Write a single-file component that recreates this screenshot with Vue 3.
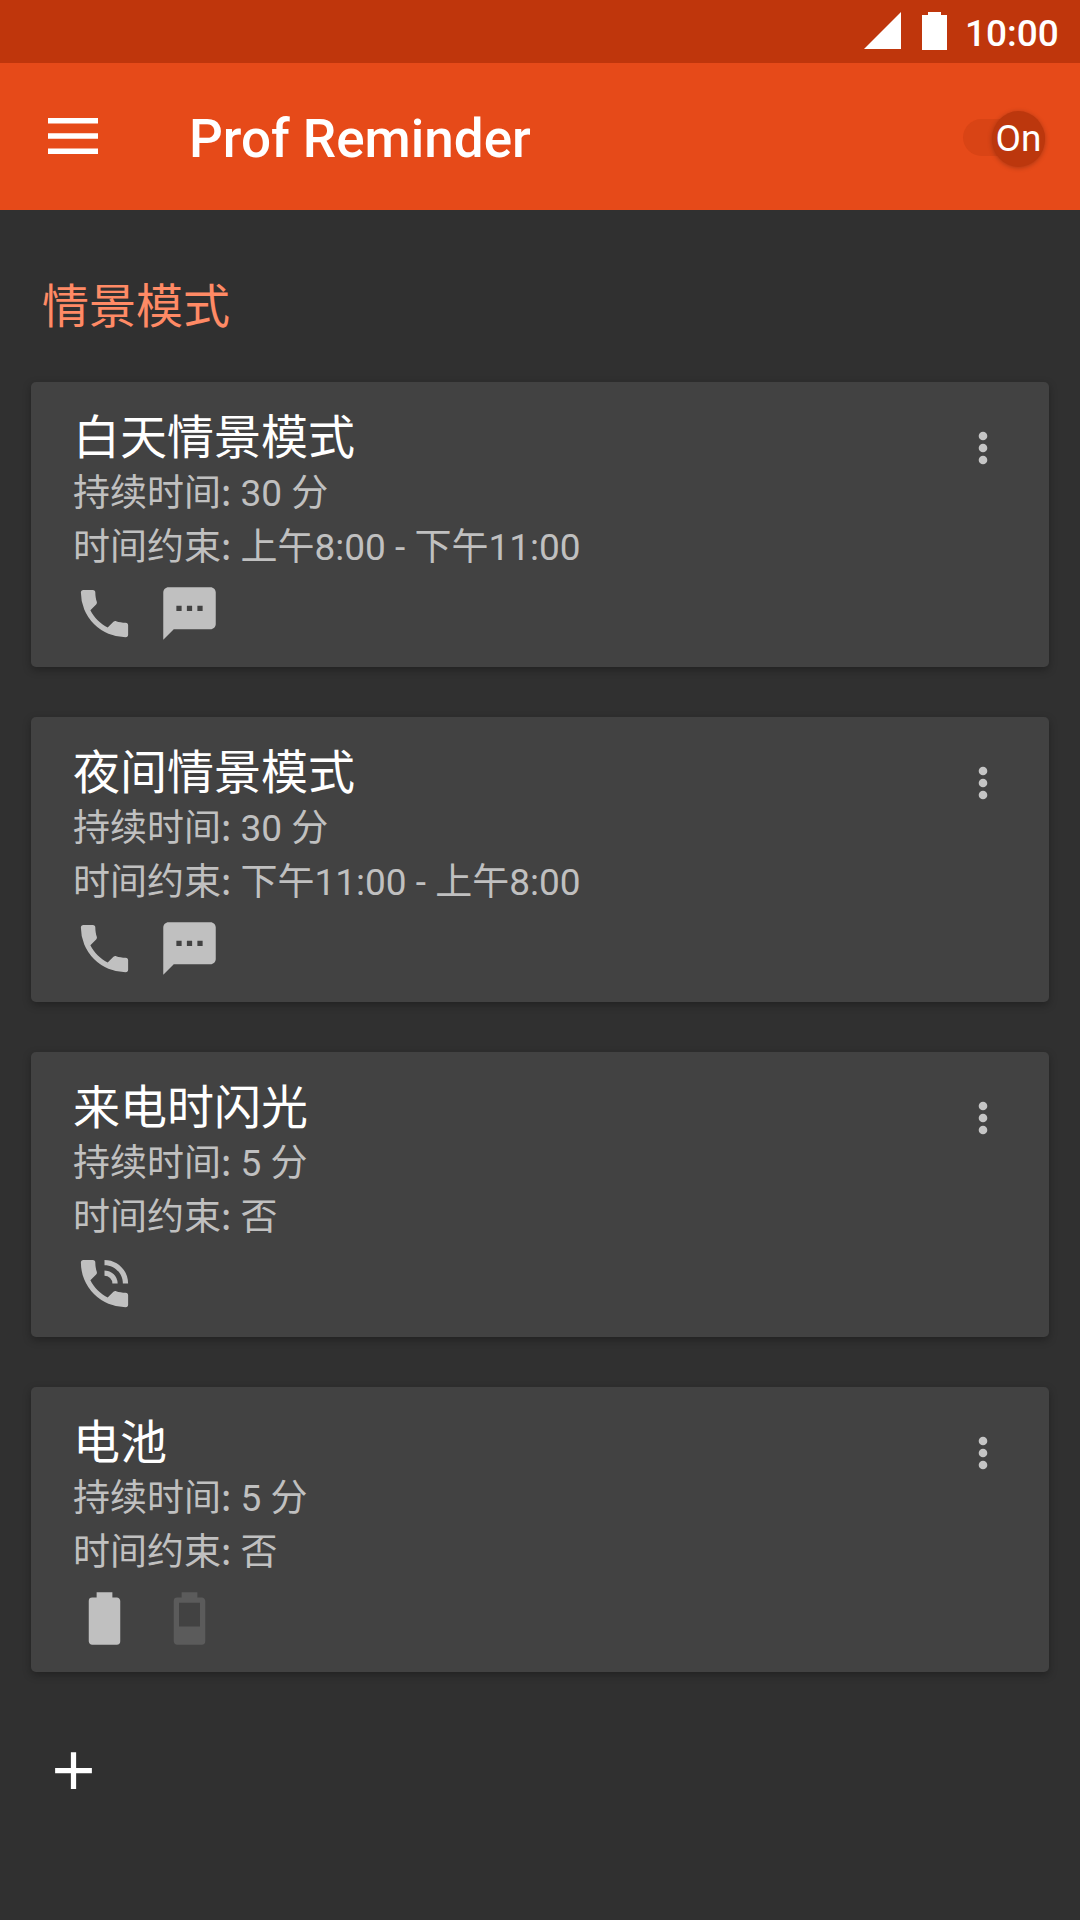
<script setup>
const phone = 'M20,15.5C18.75,15.5 17.55,15.3 16.43,14.93C16.08,14.82 15.69,14.9 15.41,15.18L13.21,17.38C10.38,15.94 8.06,13.62 6.62,10.79L8.82,8.59C9.1,8.31 9.18,7.92 9.07,7.57C8.7,6.45 8.5,5.25 8.5,4A1,1 0 0,0 7.5,3H4A1,1 0 0,0 3,4A17,17 0 0,0 20,21A1,1 0 0,0 21,20V16.5A1,1 0 0,0 20,15.5Z'
const battery = 'M16.67,4H15V2H9V4H7.33A1.33,1.33 0 0,0 6,5.33V20.67C6,21.4 6.6,22 7.33,22H16.67A1.33,1.33 0 0,0 18,20.67V5.33C18,4.6 17.4,4 16.67,4Z'
const icons = {
  phone,
  ringing: 'M15,12H17A5,5 0 0,0 12,7V9A3,3 0 0,1 15,12M19,12H21C21,7 16.97,3 12,3V5C15.86,5 19,8.13 19,12' + phone,
  message: 'M20 2H4c-1.1 0-1.99.9-1.99 2L2 22l4-4h14c1.1 0 2-.9 2-2V4c0-1.1-.9-2-2-2zM9 11H7V9h2v2zm4 0h-2V9h2v2zm4 0h-2V9h2v2z',
  battery,
  batteryLow: 'M16,15H8V6H16' + battery,
}
const profiles = [
  { name: '白天情景模式', duration: '30 分', limit: '上午8:00 - 下午11:00', icons: [{ id: 'phone' }, { id: 'message' }] },
  { name: '夜间情景模式', duration: '30 分', limit: '下午11:00 - 上午8:00', icons: [{ id: 'phone' }, { id: 'message' }] },
  { name: '来电时闪光', duration: '5 分', limit: '否', icons: [{ id: 'ringing' }] },
  { name: '电池', duration: '5 分', limit: '否', icons: [{ id: 'battery' }, { id: 'batteryLow', off: true }] },
]
</script>

<template>
  <div class="screen">
    <div class="status">
      <svg class="signal" width="37" height="37" viewBox="0 0 37 37"><path d="M0 37L37 0V37Z" fill="#fff" /></svg>
      <svg class="power" width="25" height="38" viewBox="0 0 25 38"><path d="M6 0H19V3H25V38H0V3H6Z" fill="#fff" /></svg>
      <span class="clock">10:00</span>
    </div>
    <header class="toolbar">
      <svg class="menu" width="50" height="36" viewBox="0 0 50 36"><path d="M0 0H50V5.6H0ZM0 15.2H50V20.8H0ZM0 30.4H50V36H0Z" fill="#fff" /></svg>
      <h1>Prof Reminder</h1>
      <div class="switch">
        <div class="thumb">On</div>
      </div>
    </header>
    <h2>情景模式</h2>
    <main>
      <section v-for="p in profiles" :key="p.name" class="card">
        <div class="info">
          <h3>{{ p.name }}</h3>
          <p><span class="label">持续时间:</span> {{ p.duration }}</p>
          <p><span class="label">时间约束:</span> {{ p.limit }}</p>
          <div class="icons">
            <svg v-for="i in p.icons" :key="i.id" :class="{ off: i.off }" width="63" height="63" viewBox="0 0 24 24" fill-rule="evenodd"><path :d="icons[i.id]" /></svg>
          </div>
        </div>
        <svg class="more" width="10" height="34" viewBox="0 0 10 34"><circle cx="5" cy="5" r="4.3" /><circle cx="5" cy="17" r="4.3" /><circle cx="5" cy="29" r="4.3" /></svg>
      </section>
    </main>
    <svg class="add" width="63" height="63" viewBox="0 0 24 24"><path d="M19,13H13V19H11V13H5V11H11V5H13V11H19V13Z" fill="#fff" /></svg>
  </div>
</template>

<style>
body { background: #303030; }
</style>

<style scoped>
.screen { width: 1080px; height: 1920px; overflow: hidden; background: #303030; font-family: Roboto, "Noto Sans CJK SC", sans-serif; color: #fff; }
h1, h2, h3, p { margin: 0; font-weight: 400; }
.status { height: 63px; box-sizing: border-box; background: #bf360c; display: flex; align-items: flex-start; padding: 12px 21px 0 864px; }
.signal { flex: none; }
.power { flex: none; margin-left: 21px; }
.clock { margin-left: 18px; margin-top: 2px; font-size: 37px; line-height: 40px; font-weight: 500; white-space: nowrap; }
.toolbar { height: 147px; background: #e64a19; display: flex; align-items: center; padding: 0 35px 0 48px; }
.menu { display: block; height: 36px; flex: none; margin-bottom: 1px; }
h1 { margin-left: 91px; font-size: 53px; font-weight: 500; line-height: 62px; white-space: nowrap; margin-top: 5px; }
.switch { margin-left: auto; margin-top: 1px; width: 82px; height: 37px; border-radius: 19px; background: #d94415; display: flex; align-items: center; justify-content: flex-end; }
.thumb { width: 53px; height: 56px; flex: none; margin-top: 3px; border-radius: 50%; background: #bc370d; box-shadow: 0 1px 5px rgba(0, 0, 0, .25); display: flex; align-items: center; justify-content: center; font-size: 37px; }
h2 { margin: 65px 0 0 42px; height: 64px; font-size: 47px; line-height: 64px; color: #ff8a65; }
main { margin: 43px 31px 0; display: flex; flex-direction: column; gap: 50px; }
.card { height: 285px; border-radius: 5px; background: #424242; box-shadow: 0 3px 8px rgba(0, 0, 0, .3); display: flex; justify-content: space-between; align-items: flex-start; }
.info { padding: 27px 0 0 42px; }
h3 { height: 54px; font-size: 47px; line-height: 57px; white-space: nowrap; }
p { height: 54px; line-height: 54px; font-size: 37px; color: #c0c0c0; white-space: nowrap; }
.label { font-family: "Noto Sans CJK SC", sans-serif; }
.icons { display: flex; gap: 22px; margin-top: 11px; fill: #c0c0c0; }
.icons svg { display: block; }
.off { fill: #5b5b5b; }
.more { margin: 48.5px 61px 0 0; fill: #c5c5c5; }
.add { display: block; margin: 67px 0 0 42px; }
</style>
